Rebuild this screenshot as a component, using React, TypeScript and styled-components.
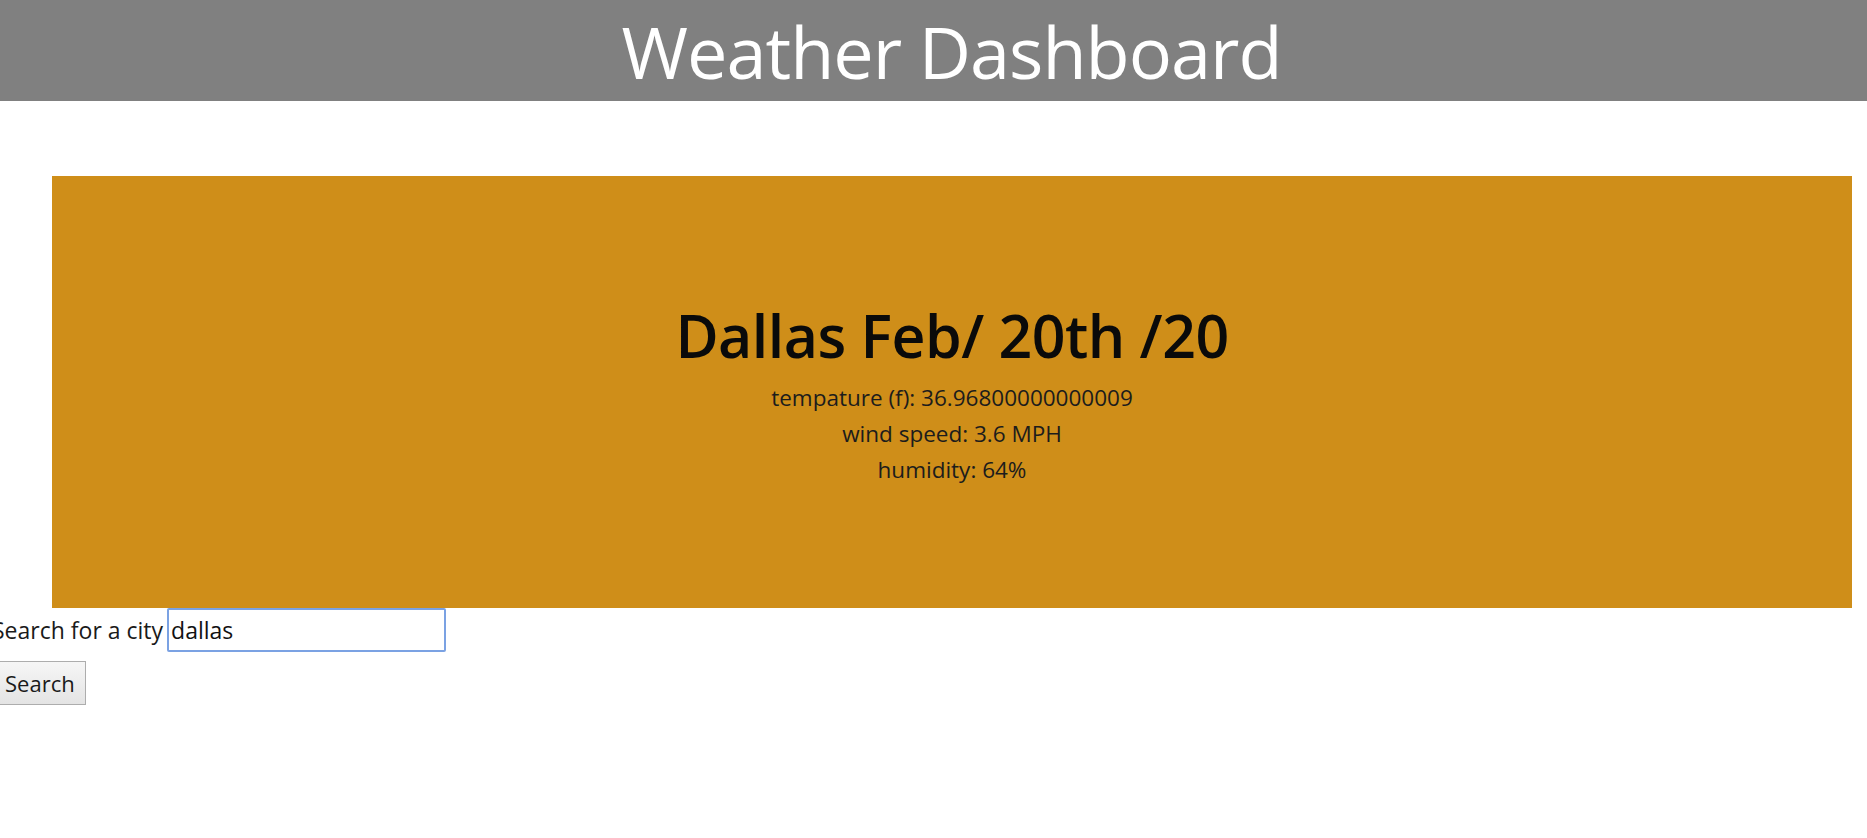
import React, { useState } from "react";
import styled, { createGlobalStyle } from "styled-components";

const GlobalStyle = createGlobalStyle`
  html, body {
    margin: 0;
    padding: 0;
    background: #ffffff;
    font-family: "Open Sans", "Noto Sans", Arial, sans-serif;
    color: #1a1a1a;
    overflow: hidden;
  }
`;

const Header = styled.header`
  height: 101px;
  padding-left: 36px;
  background-color: #808080;
  display: flex;
  align-items: center;
  justify-content: center;
`;

const Title = styled.h1`
  margin: 0;
  color: #ffffff;
  font-weight: 400;
  font-size: 72px;
  letter-spacing: -1px;
  line-height: 1;
`;

const Main = styled.main`
  padding: 75px 15px 0 52px;
`;

const Card = styled.section`
  height: 432px;
  background-color: #cf8e19;
  display: flex;
  flex-direction: column;
  align-items: center;
  justify-content: center;
`;

const CityDate = styled.h2`
  margin: 4px 0 10px;
  font-size: 59px;
  font-weight: 600;
  color: #0a0a0a;
  line-height: 1.2;
  letter-spacing: -0.5px;
`;

const Stat = styled.p`
  margin: 0;
  font-size: 22.5px;
  line-height: 36px;
  color: #1c1c1c;
`;

const SearchForm = styled.form`
  margin-left: -8px;
  font-size: 23px;
`;

const Row = styled.div`
  display: flex;
  align-items: center;
  gap: 4px;
`;

const Label = styled.label`
  color: #1a1a1a;
`;

const CityInput = styled.input`
  width: 279px;
  height: 44px;
  box-sizing: border-box;
  border: 2px solid #7ba2e3;
  border-radius: 2px;
  padding: 0 2px;
  font-family: inherit;
  font-size: 23px;
  color: #111;
  caret-color: #000;
  outline: none;
`;

const SearchButton = styled.button`
  margin: 9px 0 0 5px;
  height: 44px;
  padding: 0 10px 0 7px;
  font-family: inherit;
  font-size: 22px;
  color: #1a1a1a;
  background: linear-gradient(#f6f6f6, #e4e4e4);
  border: 1px solid #adadad;
  border-radius: 0;
`;

const stats = [
  "tempature (f): 36.96800000000009",
  "wind speed: 3.6 MPH",
  "humidity: 64%",
];

export default function App() {
  const [city, setCity] = useState("dallas");

  return (
    <>
      <GlobalStyle />
      <Header>
        <Title>Weather Dashboard</Title>
      </Header>
      <Main>
        <Card>
          <CityDate>Dallas Feb/ 20th /20</CityDate>
          {stats.map((s) => (
            <Stat key={s}>{s}</Stat>
          ))}
        </Card>
      </Main>
      <SearchForm onSubmit={(e) => e.preventDefault()}>
        <Row>
          <Label htmlFor="city">Search for a city</Label>
          <CityInput
            id="city"
            autoFocus
            value={city}
            onChange={(e) => setCity(e.target.value)}
          />
        </Row>
        <SearchButton type="submit">Search</SearchButton>
      </SearchForm>
    </>
  );
}
